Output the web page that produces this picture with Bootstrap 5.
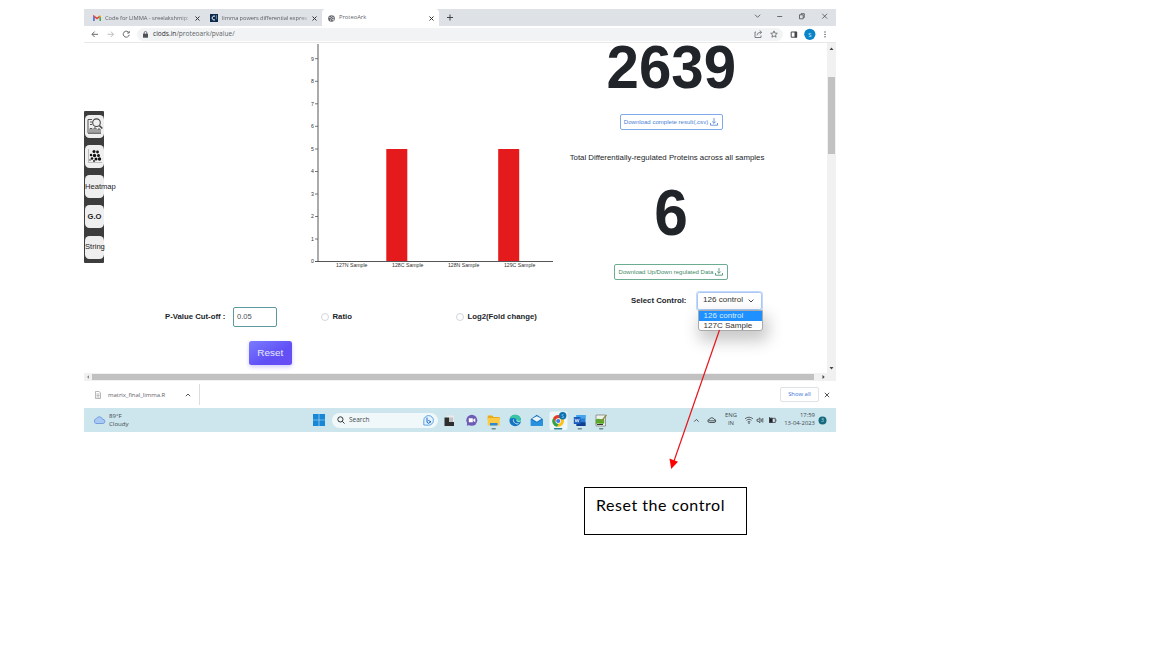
<!DOCTYPE html>
<html lang="en">
<head>
<meta charset="utf-8">
<title>ProteoArk</title>
<link href="https://cdn.jsdelivr.net/npm/bootstrap@5.3.0/dist/css/bootstrap.min.css" rel="stylesheet">
<style>
body{width:1152px;height:648px;overflow:hidden;background:#fff;color:#212529;font-family:"Liberation Sans",sans-serif;font-size:7.75px;line-height:1}
svg{display:block;flex:none}
.ui{font-family:"Open Sans","Noto Sans",sans-serif}
.desktop{width:752px;height:423px;margin:9px 0 0 84px}
.tabstrip{height:17px;background:#dee1e6;color:#5f6368;font-size:5.8px}
.tab-item{height:17px;padding-top:1px}
.tab-title{white-space:nowrap;line-height:9px;letter-spacing:-.08px}
.tab-one{width:117px;padding-left:9px}
.tab-two{width:121px;padding-left:9px}
.tab-on{width:117px;background:#fff;border-radius:4px 4px 0 0;padding-left:6px}
.fade-end{-webkit-mask-image:linear-gradient(90deg,#000 88%,rgba(0,0,0,.25));mask-image:linear-gradient(90deg,#000 88%,rgba(0,0,0,.25))}
.toolbar{height:17px;border-bottom:1px solid #e8e8e8}
.omni{width:646px;height:13px;border-radius:7px;background:#f1f3f4;color:#5f6368;font-size:6.6px;padding:0 5px 0 6px}
.viewport{height:330px}
.rail-wrap{width:20px;padding-top:68px}
.rail{width:20px;height:152px;background:#3d3d3d;padding:3.5px 0 0 1px;gap:7.2px;font-size:7.6px;border-radius:1px}
.rail-btn{width:19px;height:23.1px;background:#efefef;border-radius:4.5px;white-space:nowrap;color:#222;flex:none}
.main-col{width:456px}
.form-line{height:22px;margin-top:34px;padding-left:61px;font-weight:700}
.pval{width:43.5px;height:20.5px;border:1.5px solid #5b9a9c;border-radius:2px;padding-left:3px;font-weight:400;font-size:7.6px;color:#495057;background:#fff}
.dot{width:8px;height:8px;border:1px solid #d3d6d9;border-radius:50%}
.reset{width:42.5px;height:23.5px;margin:13px 0 0 145px;border-radius:2.5px;background:linear-gradient(150deg,#7a7cff,#6050f5 60%,#6a4df4);color:#e9e9ff;font-size:9.9px;box-shadow:0 2px 4px #cfcdfb}
.stats{width:267px;padding-right:45px}
.big-one{font-size:60.5px;font-weight:700;line-height:48px;height:48px;transform:scaleX(.962)}
.big-two{font-size:65px;font-weight:700;line-height:57px;height:56px;transform:scaleX(.93)}
.dl{height:16px;border:1px solid #7fa9ea;border-radius:2px;font-size:6.05px;color:#4a7fd6;gap:2px;white-space:nowrap}
.dl-green{border-color:#6dac90;color:#3f8a66}
.ctl{height:20px;font-weight:700;font-size:7.8px}
.picker{width:65px;height:18px;border:1px solid #a9c8f6;border-radius:2.5px;box-shadow:0 0 0 1px #c3d8fb;font-weight:400;padding:0 7px 0 5px;font-size:8.1px;color:#333}
.picker-menu{left:-.5px;top:17px;width:65px;height:21px;background:#fff;border:.6px solid #aaa;border-radius:0 0 3px 3px;box-shadow:3px 8px 16px 2px rgba(0,0,0,.22);font-size:8.05px;font-weight:400;color:#333}
.picker-menu div{height:10px;line-height:10px;padding-left:5px;white-space:nowrap}
.picker-menu .on{background:#1e90ff;color:#d9edff}
.vbar{width:9px;background:#f1f1f1}
.vthumb{height:77px;background:#c1c1c1;width:7px}
.hbar{height:8px;background:#f1f1f1}
.shelf{height:27px;font-size:6px;color:#5f6368}
.showall{width:39px;height:15px;border:1px solid #dfe2e6;border-radius:2px;color:#3b73d9;font-size:5.9px}
.taskbar{height:24px;background:#cde6ed;font-size:6.1px;color:#43494d}
.search-pill{width:106px;height:15px;border-radius:8px;background:#f1f8fa;font-size:6.5px}
.callout{width:163px;height:48px;margin:55px 0 0 584px;border:1px solid #000;padding:7px 0 0 11px;font-family:Lato,sans-serif;font-size:16px;line-height:19px;color:#000;letter-spacing:.54px;white-space:nowrap}
.arrow{left:660px;top:325px}
</style>
</head>
<body class="position-relative">
<div class="desktop d-flex flex-column">
  <!-- tab strip -->
  <div class="tabstrip ui d-flex">
    <div class="tab-item tab-one d-flex align-items-center">
      <svg width="8" height="6" viewBox="0 0 8 6"><path d="M.9 6V1.2L4 3.6l3.1-2.4" fill="none" stroke="#ea4335" stroke-width="1.5"/><path d="M.8 1.5V6" stroke="#4285f4" stroke-width="1.5"/><path d="M7.2 1.5V6" stroke="#34a853" stroke-width="1.5"/><path d="M6.5.8h1.4v1.5H6.5z" fill="#fbbc04"/></svg>
      <span class="tab-title fade-end" style="margin-left:4px;width:86px">Code for LIMMA - sreelakshmip:</span>
      <svg width="5" height="5" viewBox="0 0 5 5" style="margin-left:3.5px"><path d="M.5.5l4 4m0-4l-4 4" stroke="#333" stroke-width="1"/></svg>
    </div>
    <div class="tab-item tab-two d-flex align-items-center">
      <svg width="8" height="8" viewBox="0 0 8 8"><path d="M0 0h8v8H0z" fill="#0c2a4d"/><path d="M5 2.2A2 2 0 1 0 5 5.8" fill="none" stroke="#fff"/><path d="M6.4 1.2v4" stroke="#9db4cc" stroke-width=".7"/></svg>
      <span class="tab-title fade-end" style="margin-left:4px;width:87px;letter-spacing:-.13px">limma powers differential expres</span>
      <svg width="5" height="5" viewBox="0 0 5 5" style="margin-left:3px"><path d="M.5.5l4 4m0-4l-4 4" stroke="#333" stroke-width="1"/></svg>
    </div>
    <div class="tab-item tab-on d-flex align-items-center">
      <svg width="7" height="7" viewBox="0 0 8 8"><circle cx="4" cy="4" r="3.8" fill="#5f6368"/><path d="M1 2.5l2 .5 1 1.200-1 .8v1.800M4.500.8L4 2l1.500.8L7 2.500M5 5l1.800-.5-.8 1.800z" stroke="#fff" stroke-width=".7" fill="none"/></svg>
      <span class="flex-grow-1" style="margin-left:4px">ProteoArk</span>
      <svg width="5" height="5" viewBox="0 0 5 5" style="margin-right:5px"><path d="M.5.5l4 4m0-4l-4 4" stroke="#333" stroke-width="1"/></svg>
    </div>
    <svg width="14" height="17" viewBox="0 0 14 17" style="margin-left:3px"><path d="M5 8.500h6M8 5.500v6" stroke="#444" stroke-width="1"/></svg>
    <svg class="ms-auto" width="90" height="17" viewBox="746 9 90 17" fill="none" stroke="#4a4d51" stroke-width=".8"><path d="M755 14.700l2.600 2.600 2.600-2.600M777.200 16.500h5M799.500 14.800h3.700v4h-3.700zM801 14.600v-.9h3.300v3.800h-1M822.300 13.800l4.800 4.800m0-4.800l-4.800 4.800"/></svg>
  </div>
  <!-- address bar -->
  <div class="toolbar ui d-flex align-items-center">
    <svg width="53" height="16" viewBox="84 26 53 16" fill="none" stroke="#55595e" stroke-width=".9"><path d="M98 34.300h-6m2.600-2.700L92 34.300l2.600 2.700"/><path d="M107.500 34.300h6m-2.600-2.700l2.600 2.700-2.600 2.700" stroke="#b4b7ba"/><path d="M128.800 32.600a3 3 0 1 0 .4 2.200M129.200 31v2h-2"/></svg>
    <div class="omni d-flex align-items-center">
      <svg width="5" height="7" viewBox="0 0 5 7"><path d="M0 2.700h5v4H0z" fill="#4d5156"/><path d="M1.200 3V1.800a1.300 1.300 0 0 1 2.600 0V3" fill="none" stroke="#4d5156" stroke-width=".8"/></svg>
      <span style="margin-left:5px"><span style="color:#303134">ciods.in</span>/proteoark/pvalue/</span>
      <svg class="ms-auto" width="24" height="10" viewBox="754 29 24 10" fill="none" stroke="#5f6368" stroke-width=".8"><path d="M756 32h-1v5.500h6v-2M757 35.300c.3-2 1.700-3 3.200-3h1.300m-1.800-1.800l2 1.800-2 1.800"/><path d="M774 30.900l.9 2.200 2.400.2-1.800 1.600.6 2.300-2.100-1.200-2.100 1.200.6-2.300-1.800-1.600 2.400-.2z"/></svg>
    </div>
    <svg width="53" height="16" viewBox="783 26 53 16"><path d="M791.200 32h5.500v5.200h-5.500z" fill="none" stroke="#44474a" stroke-width="1"/><path d="M794.500 31.800h2.400v5.600h-2.400z" fill="#44474a"/><circle cx="809.800" cy="34.300" r="5.600" fill="#0a84c6"/><text x="809.800" y="36.600" font-size="6" fill="#d5f0ff" text-anchor="middle">S</text><g fill="#4a4d51"><circle cx="825" cy="32" r=".7"/><circle cx="825" cy="34.400" r=".7"/><circle cx="825" cy="36.800" r=".7"/></g></svg>
  </div>
  <!-- web page -->
  <div class="viewport d-flex">
    <div class="rail-wrap">
      <div class="rail d-flex flex-column">
        <div class="rail-btn d-flex align-items-center justify-content-center">
          <svg width="16" height="16" viewBox="0 0 16 16" fill="none" stroke="#444" stroke-width=".9"><path d="M5 1.500H1v13.500M3 4h2M3 6.500h2M3 15v-4.500h2V15M7 15v-5h2v5M11 15v-4h2v4M1 15.300h13"/><circle cx="9.500" cy="4.700" r="3.800" stroke-width="1.100"/><path d="M12.300 7.500l3 3" stroke-width="1.600"/></svg>
        </div>
        <div class="rail-btn d-flex align-items-center justify-content-center">
          <svg width="16" height="16" viewBox="0 0 16 16" fill="#111"><path d="M1.500 1v13.500H15" fill="none" stroke="#888" stroke-width=".5"/><circle cx="7" cy="3.500" r="1.500"/><circle cx="10.500" cy="4" r="1.400"/><circle cx="4" cy="7" r="1.200"/><circle cx="7.500" cy="7.500" r="1.700"/><circle cx="11.500" cy="7.500" r="1.500"/><circle cx="5" cy="10.500" r="1.300"/><circle cx="9" cy="11" r="1.500"/><circle cx="12.500" cy="11" r="1.700"/><circle cx="7" cy="13" r=".9"/><circle cx="3" cy="12" r=".7"/></svg>
        </div>
        <div class="rail-btn d-flex align-items-center">Heatmap</div>
        <div class="rail-btn d-flex align-items-center justify-content-center fw-bold">G.O</div>
        <div class="rail-btn d-flex align-items-center">String</div>
      </div>
    </div>
    <div class="main-col">
      <svg width="456" height="229" viewBox="104 43 456 229" font-size="5.200" fill="#333">
        <path d="M386.300 149h21v112.500h-21zM498.200 149h21v112.500h-21z" fill="#e41a1c"/>
        <path d="M318 44v217.600" stroke="#666" stroke-width="1.100"/>
        <path d="M315 261.500h238" stroke="#555" stroke-width="1"/>
        <path d="M315 239h3M315 216.500h3M315 194h3M315 171.500h3M315 149h3M315 126.300h3M315 103.800h3M315 81.300h3M315 58.700h3" stroke="#555" stroke-width=".8"/>
        <g text-anchor="end"><text x="314" y="60.600">9</text><text x="314" y="83.200">8</text><text x="314" y="105.700">7</text><text x="314" y="128.200">6</text><text x="314" y="150.900">5</text><text x="314" y="173.400">4</text><text x="314" y="195.900">3</text><text x="314" y="218.400">2</text><text x="314" y="240.900">1</text><text x="314" y="263.400">0</text></g>
        <g text-anchor="middle"><text x="351.800" y="267">127N Sample</text><text x="407.800" y="267">128C Sample</text><text x="463.600" y="267">128N Sample</text><text x="519.600" y="267">129C Sample</text></g>
      </svg>
      <div class="form-line d-flex align-items-center">
        <label style="width:68px">P-Value Cut-off :</label>
        <div class="pval d-flex align-items-center">0.05</div>
        <span class="dot" style="margin-left:44px"></span><label style="margin-left:4px;width:123px">Ratio</label>
        <span class="dot"></span><label class="text-nowrap" style="margin-left:4px">Log2(Fold change)</label>
      </div>
      <div class="reset d-flex align-items-center justify-content-center">Reset</div>
    </div>
    <div class="stats d-flex flex-column align-items-center">
      <div class="big-one">2639</div>
      <div class="dl d-flex align-items-center justify-content-center" style="width:103px;margin-top:23px"><span>Download complete result(.csv)</span><svg width="8" height="8" viewBox="0 0 8 8" fill="none" stroke="currentColor" stroke-width=".8"><path d="M.5 5v2.200h7V5M4 0v5.200M2.200 3.500L4 5.300l1.800-1.800"/></svg></div>
      <div class="text-nowrap" style="margin:23px 8px 0 0;height:9px;line-height:9px;font-size:7.850px">Total Differentially-regulated Proteins across all samples</div>
      <div class="big-two" style="margin-top:22px">6</div>
      <div class="dl dl-green d-flex align-items-center justify-content-center" style="width:114px;margin-top:24px"><span>Download Up/Down regulated Data</span><svg width="8" height="8" viewBox="0 0 8 8" fill="none" stroke="currentColor" stroke-width=".8"><path d="M.5 5v2.200h7V5M4 0v5.200M2.200 3.500L4 5.300l1.800-1.800"/></svg></div>
      <div class="ctl d-flex align-items-center align-self-start text-nowrap" style="margin:10.500px 0 0 71px">
        <label style="width:66px">Select Control:</label>
        <div class="picker position-relative d-flex align-items-center justify-content-between"><span>126 control</span>
          <svg width="6" height="4" viewBox="0 0 6 4"><path d="M.6.600L3 3 5.400.600" fill="none" stroke="#333" stroke-width=".9"/></svg>
          <div class="picker-menu position-absolute"><div class="on">126 control</div><div>127C Sample</div></div>
        </div>
      </div>
    </div>
    <div class="vbar d-flex flex-column align-items-center">
      <svg width="9" height="34" viewBox="0 0 9 34"><path d="M2.500 7l2-2.500 2 2.500z" fill="#444"/></svg>
      <div class="vthumb"></div>
      <svg class="mt-auto" width="9" height="9" viewBox="0 0 9 9"><path d="M2.500 3l2 2.500 2-2.500z" fill="#444"/></svg>
    </div>
  </div>
  <div class="hbar d-flex align-items-center">
    <svg width="8" height="8" viewBox="0 0 8 8"><path d="M5 2.300L3 4l2 1.700z" fill="#888"/></svg>
    <div style="width:722px;height:6.500px;background:#c1c1c1"></div>
    <svg style="margin-left:6px" width="8" height="8" viewBox="0 0 8 8"><path d="M2.500 2L4.700 4l-2.200 2z" fill="#444"/></svg>
  </div>
  <!-- downloads shelf -->
  <div class="shelf ui d-flex align-items-center">
    <svg style="margin-left:11px" width="6" height="8" viewBox="0 0 6 8" fill="none" stroke="#999" stroke-width=".7"><path d="M.5.500h3.700l1.300 1.500v5.500h-5zM1.500 3h3M1.500 4.500h3M1.500 6h3"/></svg>
    <span style="margin-left:7px;width:77px;letter-spacing:-.05px">matrix_final_limma.R</span>
    <svg width="6" height="4" viewBox="0 0 6 4"><path d="M.8 3.200L3 1l2.200 2.200" fill="none" stroke="#444" stroke-width=".9"/></svg>
    <div style="width:1px;height:21px;margin-left:8px;background:#dadce0"></div>
    <div class="showall ms-auto d-flex align-items-center justify-content-center">Show all</div>
    <svg style="margin:0 6px 0 5px" width="6" height="6" viewBox="0 0 6 6"><path d="M.8.800l4.400 4.400m0-4.400L.8 5.200" stroke="#444" stroke-width=".9"/></svg>
  </div>
  <!-- system taskbar -->
  <div class="taskbar ui d-flex align-items-center">
    <svg style="margin-left:9px" width="13" height="10" viewBox="0 0 13 10"><path d="M3 8.500a2.500 2.500 0 0 1 .3-4.800 3.300 3.300 0 0 1 6.200.6 2.100 2.100 0 0 1 .5 4.200z" fill="#a9c9f5" stroke="#6790d8" stroke-width=".8"/></svg>
    <div style="margin-left:3px;width:204px;line-height:7.800px">89°F<br>Cloudy</div>
    <svg width="12" height="12" viewBox="0 0 12 12" fill="#1787d8"><path d="M0 0h5.700v5.700H0zM6.300 0H12v5.700H6.300zM0 6.300h5.700V12H0zM6.300 6.300H12V12H6.300z"/></svg>
    <div class="search-pill d-flex align-items-center" style="margin-left:7px;padding:0 4px 0 5px">
      <svg width="8" height="8" viewBox="0 0 8 8" fill="none" stroke="#333"><circle cx="3.400" cy="3.400" r="2.600"/><path d="M5.300 5.300L7.500 7.500"/></svg>
      <span style="margin-left:4px">Search</span>
      <svg class="ms-auto" width="11" height="11" viewBox="0 0 11 11"><path d="M.8 10V5.500A4.800 4.800 0 1 1 5.500 10.200z" fill="#e5f3fd" stroke="#3e8fdd" stroke-width=".8"/><path d="M4 2.500v4.800l1.500 1L8 6.800 5.300 5.400" fill="none" stroke="#1669c7" stroke-width="1"/></svg>
    </div>
    <svg width="173" height="24" viewBox="438 408 173 24">
      <path d="M447 415.500h7v7h-7z" fill="#e8ecec"/><path d="M444.500 417.500v8.500h9.500v-4h-5v-4.500z" fill="#2e2e2e"/><path d="M449 417.500h4v4.500h-4z" fill="#bfc3c3"/>
      <circle cx="471.800" cy="420.300" r="5.500" fill="#6d5bb5"/><path d="M466.800 425.800l.5-4 3 3z" fill="#6d5bb5"/><path d="M468.800 418.200h4v4h-4zM473.300 419.600l2-1.300v4l-2-1.300z" fill="#fff"/>
      <path d="M487.700 415.500h4.500l1.500 1.500h6v3h-12z" fill="#e8a91c"/><path d="M487.700 418h12v7.500h-12z" fill="#fccb45"/><path d="M490 423h7.500v2.500H490z" fill="#2d86d6"/><path d="M492.200 428.800h3" stroke="#6f8890" stroke-width="1.400" stroke-linecap="round"/>
      <circle cx="515.200" cy="420.500" r="5.800" fill="#1374c4"/><path d="M509.600 419a5.800 5.800 0 0 1 11.400 1.200c0 2.300-3.800 2.700-4.200 1 .8-2.700-4-4.300-7.200-2.200z" fill="#38c5a4"/><path d="M513.500 419.500c-.5 3 2 4.800 5 4.200M517 419.800c-.5 1.500 1.500 2.300 3.700 1.200" stroke="#cbe9f0" stroke-width="1" fill="none"/>
      <path d="M530.800 419l6-4.200 6 4.200v6.700h-12z" fill="#1b73bd"/><path d="M532 418.700l4.800-2.500 4.800 2.500-4.800 3z" fill="#eaf5fb"/><path d="M530.800 419.500l6 3.300 6-3.300v6.200h-12z" fill="#2692df"/>
      <rect x="549.500" y="411.500" width="18" height="18.500" rx="2" fill="#edf6f8"/><path d="M554.600 428.800h7" stroke="#2b8096" stroke-width="1.500" stroke-linecap="round"/>
      <circle cx="558.200" cy="421" r="5.800" fill="#fbc116"/><path d="M553.200 418a5.800 5.800 0 0 1 10.100 0h-5.100l-2.600 4.500z" fill="#e33b2e"/><path d="M553.200 418l2.700 4.500 2.600 1.500-1.500 2.800a5.800 5.800 0 0 1-3.800-8.800z" fill="#2fa24c"/><circle cx="558.200" cy="421" r="2.700" fill="#fff"/><circle cx="558.200" cy="421" r="2.100" fill="#3b7de9"/>
      <circle cx="562.700" cy="415.800" r="3.700" fill="#0c72b0"/><text x="562.700" y="417.600" font-size="5" fill="#9ed8f5" text-anchor="middle">S</text>
      <path d="M576.500 415h9v11h-9z" fill="#2b7cd3"/><path d="M576.500 415h9v3.500h-9z" fill="#41a5ee"/><path d="M576.500 422.300h9v3.700h-9z" fill="#103f91"/><path d="M573.800 417h6.700v7h-6.700z" fill="#185abd"/><path d="M575 418.700l1 3.500 1.100-3 1.100 3 1-3.500" stroke="#fff" stroke-width=".7" fill="none"/><path d="M578.300 428.800h3" stroke="#6f8890" stroke-width="1.400" stroke-linecap="round"/>
      <path d="M596 415h9.500v11H596z" fill="#eef2e8" stroke="#777" stroke-width=".7"/><path d="M595.700 419.500c2.500-2 5 .5 8.500-.7v4.500c-3 1.400-5-.8-8.500.7z" fill="#59a82c"/><path d="M601 421.500l5.500-6.500" stroke="#8a8d3a" stroke-width="1.200"/><path d="M597 424.500h6" stroke="#333"/><path d="M599.700 428.800h3" stroke="#6f8890" stroke-width="1.400" stroke-linecap="round"/>
    </svg>
    <svg class="ms-auto" width="30" height="24" viewBox="690 408 30 24" fill="none" stroke="#3d4347" stroke-width=".9"><path d="M694.200 421.600l2.200-2.200 2.200 2.200"/><path d="M709.500 422.500a1.600 1.600 0 0 1 0-3.200 2.500 2.500 0 0 1 4.600 0 1.600 1.600 0 0 1 0 3.200zM708.500 420.800h7"/></svg>
    <div class="text-center" style="width:22px;line-height:7.800px;font-size:5.900px">ENG<br>IN</div>
    <svg width="38" height="24" viewBox="742 408 38 24" fill="none" stroke="#3d4347" stroke-width=".8"><path d="M745 418.900c2.300-2.200 5.700-2.200 8 0M746.400 420.400c1.500-1.500 3.700-1.500 5.200 0M747.700 421.900c.8-.7 1.800-.7 2.600 0"/><circle cx="749" cy="423" r=".5"/><path d="M757 419.300h1.300l1.600-1.500v5l-1.600-1.500H757zM761.300 418.800v3M762.800 418v4.600"/><path d="M769.500 418.300h5.800v4.200h-5.800z"/><path d="M769.500 418.300h2.800v4.200h-2.800z" fill="#222"/><path d="M776 419.600v1.600M769.500 417v2"/></svg>
    <div class="text-end text-nowrap" style="width:35px;line-height:7.800px;font-size:5.900px">17:59<br>13-04-2023</div>
    <svg style="margin:0 9px 0 3px" width="9" height="9" viewBox="0 0 9 9"><circle cx="4.500" cy="4.500" r="4" fill="#17697d"/><text x="4.500" y="6.300" font-size="5" fill="#bfe3ec" text-anchor="middle">3</text></svg>
  </div>
</div>
<div class="callout">Reset the control</div>
<svg class="arrow position-absolute" width="64" height="148" viewBox="660 325 64 148"><path d="M719.500 330L674 461" stroke="#e8141c" stroke-width="1.200"/><path d="M669.500 458.500l8.500 3.200-6.800 7.300z" fill="#f00"/></svg>
<script src="https://cdn.jsdelivr.net/npm/bootstrap@5.3.0/dist/js/bootstrap.bundle.min.js"></script>
</body>
</html>
